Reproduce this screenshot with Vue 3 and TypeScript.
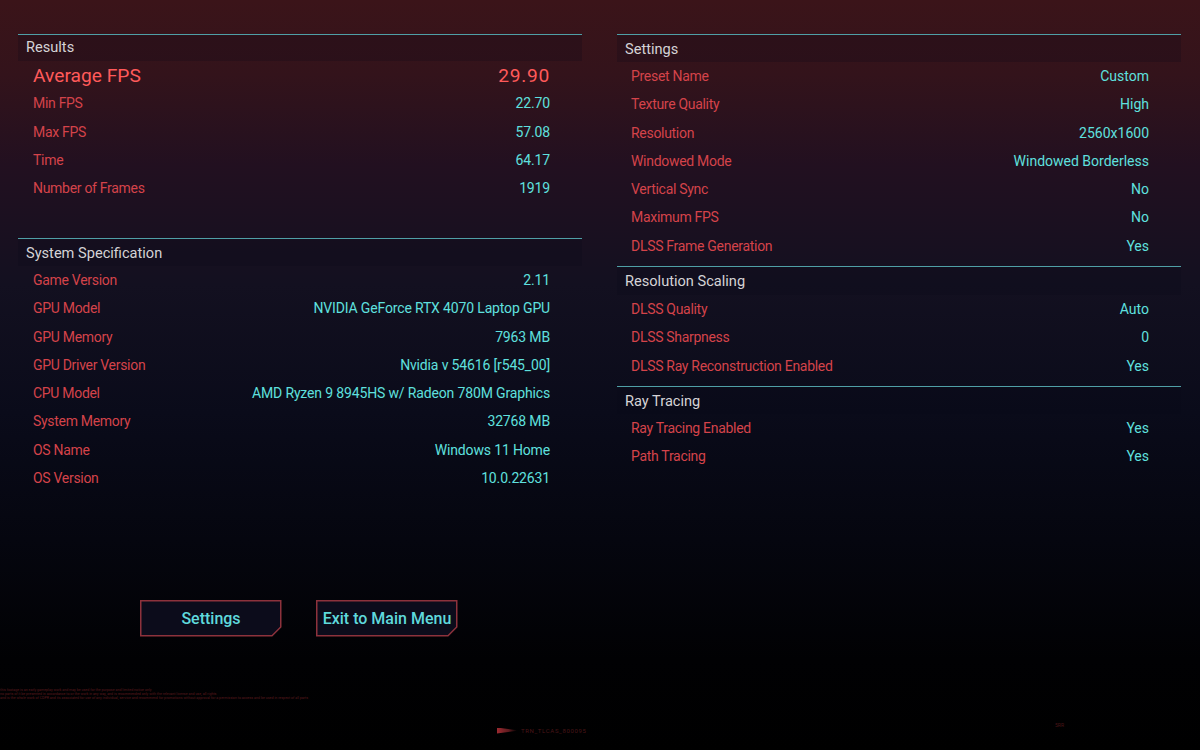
<template>
  <div class="screen">
    <div class="columns">
      <div class="column left">
        <section v-for="s in leftSections" :key="s.title" class="panel">
          <h2 class="panel-title">{{ s.title }}</h2>
          <div v-for="r in s.rows" :key="r[0]" class="row" :class="{ big: r[0] === 'Average FPS' }">
            <span class="label">{{ r[0] }}</span>
            <span class="value">{{ r[1] }}</span>
          </div>
        </section>
      </div>
      <div class="column right">
        <section v-for="s in rightSections" :key="s.title" class="panel">
          <h2 class="panel-title">{{ s.title }}</h2>
          <div v-for="r in s.rows" :key="r[0]" class="row">
            <span class="label">{{ r[0] }}</span>
            <span class="value">{{ r[1] }}</span>
          </div>
        </section>
      </div>
    </div>

    <div class="actions">
      <button v-for="b in buttons" :key="b" class="btn">
        <svg class="btn-frame" width="142" height="37" viewBox="0 0 142 37">
          <path d="M0.75 0.75H140.75V27L132 35.75H0.75Z" fill="#0c0c1b" stroke="#8d323c" stroke-width="1.5" />
        </svg>
        <span class="btn-text">{{ b }}</span>
      </button>
    </div>

    <footer class="legal">
      <p>this footage is an early gameplay work and may be used for the purpose and limited notice only</p>
      <p>no parts of it be presented in accordance to or the work in any way, and is recommended only with the relevant license and use, all rights</p>
      <p>and is the whole work of CDPR and its associated for use of any individual, service and recommend for promotions without approval for a permission to access and be used in respect of all parts</p>
    </footer>

    <div class="build">
      <i class="build-mark"></i>
      <span>TRN_TLCAS_800095</span>
    </div>
    <span class="corner">5RR</span>
  </div>
</template>

<script setup lang="ts">
type Section = { title: string; rows: [string, string][] };

const leftSections: Section[] = [
  {
    title: 'Results',
    rows: [
      ['Average FPS', '29.90'],
      ['Min FPS', '22.70'],
      ['Max FPS', '57.08'],
      ['Time', '64.17'],
      ['Number of Frames', '1919'],
    ],
  },
  {
    title: 'System Specification',
    rows: [
      ['Game Version', '2.11'],
      ['GPU Model', 'NVIDIA GeForce RTX 4070 Laptop GPU'],
      ['GPU Memory', '7963 MB'],
      ['GPU Driver Version', 'Nvidia v 54616 [r545_00]'],
      ['CPU Model', 'AMD Ryzen 9 8945HS w/ Radeon 780M Graphics'],
      ['System Memory', '32768 MB'],
      ['OS Name', 'Windows 11 Home'],
      ['OS Version', '10.0.22631'],
    ],
  },
];

const rightSections: Section[] = [
  {
    title: 'Settings',
    rows: [
      ['Preset Name', 'Custom'],
      ['Texture Quality', 'High'],
      ['Resolution', '2560x1600'],
      ['Windowed Mode', 'Windowed Borderless'],
      ['Vertical Sync', 'No'],
      ['Maximum FPS', 'No'],
      ['DLSS Frame Generation', 'Yes'],
    ],
  },
  {
    title: 'Resolution Scaling',
    rows: [
      ['DLSS Quality', 'Auto'],
      ['DLSS Sharpness', '0'],
      ['DLSS Ray Reconstruction Enabled', 'Yes'],
    ],
  },
  {
    title: 'Ray Tracing',
    rows: [
      ['Ray Tracing Enabled', 'Yes'],
      ['Path Tracing', 'Yes'],
    ],
  },
];

const buttons = ['Settings', 'Exit to Main Menu'];
</script>

<style>
html, body { margin: 0; background: #000; }
</style>

<style scoped>
.screen {
  position: relative;
  width: 1200px;
  height: 750px;
  overflow: hidden;
  font-family: Roboto, "Liberation Sans", sans-serif;
  background: linear-gradient(180deg, #3b1419 0%, #33131b 10%, #221020 22%, #131020 38%, #0a0b1a 55%, #05060f 72%, #010103 88%, #000 100%);
}
.columns {
  display: grid;
  grid-template-columns: 564px 564px;
  column-gap: 35px;
  padding: 34px 0 0 18px;
  height: 600px;
  box-sizing: border-box;
}
.column { display: flex; flex-direction: column; }
.left { gap: 35px; }
.right { gap: 5px; }
.panel { border-top: 1px solid #4f9fa6; }
.left .panel:first-child { height: 168px; }
.right .panel:nth-child(1) { height: 226px; }
.right .panel:nth-child(2) { height: 114px; }
.panel-title {
  margin: 0;
  height: 27px;
  line-height: 28px;
  padding-left: 8px;
  font-size: 14.6px;
  font-weight: 400;
  color: #d5d3d6;
  background: rgba(10, 10, 25, 0.22);
}
.left .panel:first-child .panel-title { height: 26px; line-height: 24px; }
.right .panel:nth-child(2) .panel-title { height: 28px; }
.row {
  display: flex;
  justify-content: space-between;
  align-items: center;
  height: 28.25px;
  padding: 0 32px 0 15px;
  font-size: 14px;
}
.right .row { padding: 0 32px 0 14px; }
.label { color: #d4434a; letter-spacing: -0.3px; }
.value { color: #5fe0df; letter-spacing: -0.15px; }
.right .value { letter-spacing: 0; }
.row.big { font-size: 19.2px; }
.big .label, .big .value { color: #ff5a5a; font-weight: 400; }
.big .label { letter-spacing: 0; }
.big .value { letter-spacing: 0.7px; }
.actions {
  display: flex;
  gap: 34px;
  padding-left: 140px;
}
.btn {
  position: relative;
  width: 142px;
  height: 37px;
  padding: 0;
  border: 0;
  background: none;
  font-family: inherit;
}
.btn-frame { position: absolute; left: 0; top: 0; }
.btn-text {
  position: relative;
  font-size: 16px;
  font-weight: 500;
  line-height: 36px;
  color: #5fd9dc;
}
.legal {
  margin-top: 51px;
  font-size: 3.6px;
  line-height: 4px;
  color: #5c1a1e;
  white-space: nowrap;
}
.legal p { margin: 0; }
.build {
  position: absolute;
  left: 497px;
  top: 727px;
  display: flex;
  align-items: center;
  gap: 4px;
  font-size: 6px;
  letter-spacing: 0.65px;
  color: #4a1518;
}
.build-mark {
  width: 20px;
  height: 6px;
  background: linear-gradient(90deg, #9c2a30, #5c1a1e 60%, transparent);
  clip-path: polygon(0 0, 100% 45%, 100% 55%, 0 100%);
}
.corner {
  position: absolute;
  left: 1055px;
  top: 722px;
  font-size: 5px;
  color: #4a1518;
}
</style>
